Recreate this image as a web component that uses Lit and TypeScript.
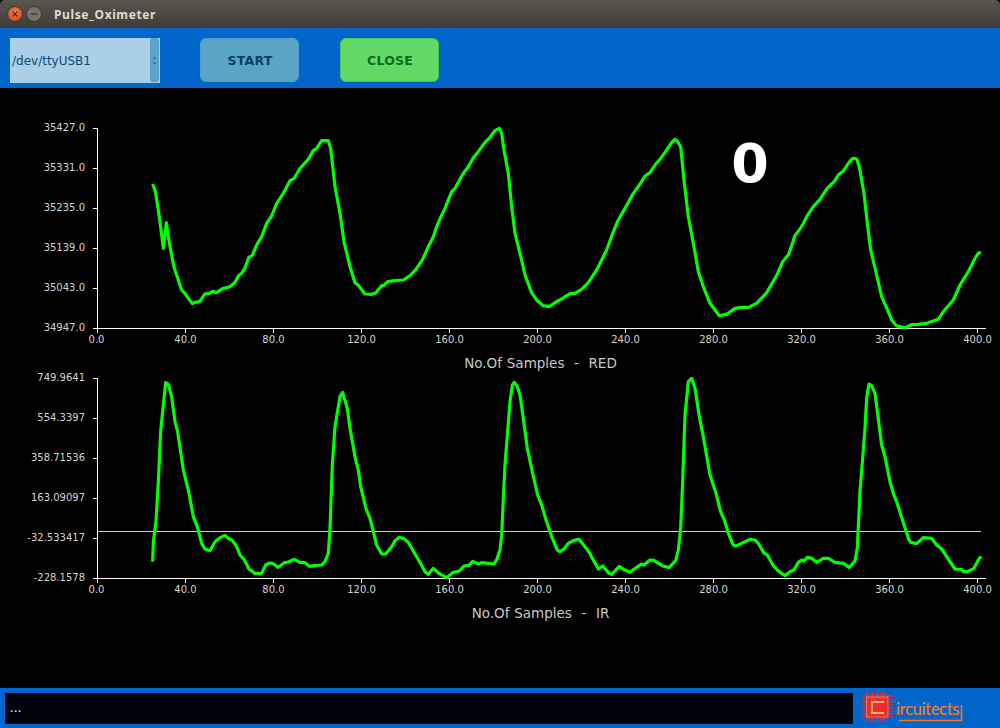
import { LitElement, html, css, svg } from "lit";
import { customElement, property } from "lit/decorators.js";

type P = [number, number];
const conv = (ox: number, oy: number, pts: P[]): P[] => pts.map(([x, y]) => [ox + x / 3, oy + y / 3] as P);

const RED: P[] = [
  ...conv(0, 110, [[458,222],[466,243],[474,295],[482,350],[490,415],[499,338],[505,380],[513,425],[522,472],[530,495],[545,540],[556,552],[577,581],[585,577],[600,574],[614,552],[628,550],[638,544],[650,548],[668,536],[685,532],[695,526],[706,516],[715,498],[725,490],[735,474],[746,443],[757,436],[770,405],[785,380],[800,340],[815,318],[830,280],[850,250],[870,212],[883,205],[900,175],[925,148],[940,122],[950,115],[965,92],[985,92],[992,115],[1005,230]]),
  ...conv(340, 110, [[0,310],[12,395],[30,470],[45,518],[55,526],[75,552],[95,553],[108,548],[125,527],[132,526],[143,515],[165,512],[190,510],[210,497],[228,478],[248,448],[265,410],[280,380],[290,350],[303,320],[315,295],[335,245],[345,235],[370,190],[385,170],[400,143],[415,125],[435,97],[450,82],[465,62],[478,55],[485,70],[492,120],[505,190],[515,290],[525,370],[540,430],[555,495],[575,548],[590,570],[610,587],[628,590],[650,575],[668,565],[680,557],[692,550],[705,550],[725,538],[745,518],[770,480],[800,420],[820,365],[835,330],[855,295],[880,250],[905,215],[915,198],[930,188],[945,165],[960,148],[975,127],[995,98],[1005,88],[1012,93]]),
  ...conv(660, 110, [[62,110],[72,210],[85,320],[100,400],[115,485],[130,530],[150,580],[178,617],[200,613],[225,595],[245,592],[265,592],[290,580],[320,548],[350,497],[368,455],[385,435],[405,377],[425,350],[440,320],[460,290],[480,268],[500,237],[525,212],[535,195],[550,183],[565,160],[578,145],[590,147],[598,170],[612,250],[622,340],[632,420],[650,495],[665,560],[685,605],[695,630],[710,648],[735,653],[755,644],[775,643],[800,640],[835,628],[850,605],[880,570],[900,525],[925,485],[945,445],[955,430],[963,427]]),
];

const IR: P[] = [
  ...conv(0, 365, [[458,590],[460,530],[468,470],[475,350],[482,200],[490,120],[497,53],[505,58],[515,95],[525,170],[533,200],[550,315],[565,375],[580,455],[592,485],[605,535],[615,552],[630,557],[645,530],[660,518],[675,511],[685,520],[695,524],[710,545],[720,570],[732,583],[747,612],[765,625],[785,625],[797,600],[808,594],[818,595],[835,607],[853,593],[865,591],[883,583],[900,592],[915,593],[928,604],[945,601],[965,600],[975,590],[985,565],[990,490],[997,300],[1005,185]]),
  ...conv(340, 365, [[0,95],[8,82],[22,130],[30,190],[45,275],[55,315],[62,365],[78,430],[90,460],[110,540],[125,567],[137,567],[155,545],[165,527],[178,517],[190,520],[205,532],[225,567],[240,592],[255,620],[265,628],[280,610],[297,625],[320,638],[340,622],[358,618],[372,603],[387,601],[398,589],[415,597],[425,593],[445,595],[462,597],[470,585],[480,555],[485,510],[490,400],[495,300],[503,200],[510,110],[517,60],[523,52],[532,65],[540,90],[550,160],[562,250],[578,325],[593,390],[605,420],[620,470],[635,515],[652,555],[660,560],[672,552],[685,535],[700,527],[717,523],[745,558],[775,612],[788,603],[807,625],[815,628],[838,604],[850,613],[870,622],[890,607],[905,597],[912,600],[930,585],[942,586],[955,595]]),
  ...conv(660, 365, [[0,597],[8,603],[28,607],[47,587],[55,555],[62,490],[68,350],[75,150],[85,50],[95,40],[105,70],[118,155],[130,215],[150,330],[168,385],[182,440],[193,465],[205,505],[220,540],[228,543],[270,523],[285,525],[295,535],[310,562],[322,570],[340,602],[355,618],[375,632],[390,620],[402,615],[415,592],[425,585],[432,588],[442,577],[455,580],[470,592],[490,580],[505,580],[525,592],[550,595],[568,607],[585,588],[592,550],[600,380],[615,190],[620,100],[627,57],[635,62],[645,85],[665,240],[675,275],[690,350],[700,385],[710,410],[745,520],[752,532],[770,536],[790,518],[815,520],[830,540],[845,552],[885,612],[905,613],[910,620],[922,620],[942,610],[955,585],[963,574]]),
];

const XT = [0, 40, 80, 120, 160, 200, 240, 280, 320, 360, 400];

@customElement("pulse-chart")
class PulseChart extends LitElement {
  @property({ attribute: false }) points: P[] = [];
  @property({ attribute: false }) yLabels: string[] = [];
  @property({ type: Number }) top = 0;
  @property({ type: Number }) vy = 0;
  @property({ type: Number }) vh = 0;
  @property() label = "";
  @property({ type: Number }) cross = 0;
  @property({ type: Boolean }) big = false;
  static styles = css`
    :host { display: block; }
    svg { display: block; width: 1000px; }
    text { font-family: "DejaVu Sans", sans-serif; fill: #d4d4d4; }
    .tick { font-size: 10px; }
    .title { font-size: 13.5px; word-spacing: 0.5px; fill: #c8c8c8; white-space: pre; text-anchor: middle; }
    .axis { stroke: #fff; stroke-width: 1; fill: none; shape-rendering: crispEdges; }
    .cross { stroke: #d0d0d0; stroke-width: 1; shape-rendering: crispEdges; }
    .line { stroke: #00ff00; stroke-width: 3.2; fill: none; stroke-linejoin: round; stroke-linecap: butt; }
    .big { font-size: 54px; font-weight: 700; fill: #fff; text-anchor: middle; }
  `;
  render() {
    const t = this.top, b = t + 200;
    const px = (v: number) => 97.5 + v * 2.2;
    return html`<svg viewBox="0 ${this.vy} 1000 ${this.vh}" style="height:${this.vh}px">
      ${this.yLabels.map((l, i) => {
        const y = b - i * 40 + 0.5;
        return svg`<text class="tick" x="85" y=${y + 2.5} text-anchor="end">${l}</text>
          <line class="axis" x1="93" x2="97" y1=${y} y2=${y}></line>`;
      })}
      <line class="axis" x1="97.5" x2="97.5" y1=${t} y2=${b + 0.5}></line>
      <line class="axis" x1="97" x2="986" y1=${b + 0.5} y2=${b + 0.5}></line>
      ${XT.map(v => svg`
        <line class="axis" x1=${px(v)} x2=${px(v)} y1=${b} y2=${b + 5}></line>
        <text class="tick" x=${px(v) - (v === 0 ? 1 : 0)} y=${b + 15} text-anchor="middle">${v.toFixed(1)}</text>`)}
      ${this.cross ? svg`<line class="cross" x1="97" x2="981" y1=${this.cross} y2=${this.cross}></line>` : ""}
      <polyline class="line" points=${this.points.map(p => p.join(",")).join(" ")}></polyline>
      <text class="title" x="540.5" y=${b + 40}>${this.label}</text>
      ${this.big ? svg`<text class="big" x="750" y="182">0</text>` : ""}
    </svg>`;
  }
}

@customElement("app-root")
export class AppRoot extends LitElement {
  static styles = css`
    :host { display: flex; flex-direction: column; width: 1000px; height: 728px; background: #000; overflow: hidden; font-family: "DejaVu Sans", sans-serif; }
    .titlebar { height: 28px; flex: none; display: flex; align-items: center; gap: 3px; padding-left: 7px; box-sizing: border-box; background: linear-gradient(#5a574f, #3e3c37); border-radius: 5px 5px 0 0; }
    .wb { width: 16px; height: 16px; flex: none; display: block; }
    .wtitle { margin-left: 9px; font: 700 12px "Noto Sans", sans-serif; color: #dfdbd2; letter-spacing: 0.6px; }
    .toolbar { height: 60px; flex: none; background: #0066cc; display: flex; align-items: flex-start; padding: 10px 0 0 10px; box-sizing: border-box; }
    .combo { width: 150px; height: 45px; box-sizing: border-box; background: #a9d0e6; display: flex; align-items: center; justify-content: space-between; padding-left: 2px; font-size: 12px; color: #0d4a6e; }
    .combo-btn { width: 9px; height: 44px; margin-right: 1px; align-self: flex-start; background: #5aa3c6; border-radius: 3px; display: flex; align-items: center; justify-content: center; font-size: 12px; color: #0d3c58; }
    .btn { width: 99px; height: 44px; box-sizing: border-box; border-radius: 6px; display: flex; align-items: center; justify-content: center; font-size: 12.5px; font-weight: 700; letter-spacing: 0.2px; }
    .start { margin-left: 40px; padding-left: 1px; background: #5aa4c6; border: 1px solid #529dc9; color: #0b3f5e; }
    .close { margin-left: 41px; padding-left: 1px; background: #63d966; border: 1px solid #3fc84f; color: #0c6a1c; }
    .main { flex: 1; min-height: 0; background: #000; }
    .footer { height: 40px; flex: none; background: #0066cc; display: flex; align-items: flex-start; padding: 5px 0 0 5px; box-sizing: border-box; }
    .console { width: 848px; height: 31px; background: #00040f; color: #fff; font-size: 12px; display: flex; align-items: center; padding-left: 5px; padding-bottom: 2px; box-sizing: border-box; }
    .logo { margin: -5px 0 0 5px; display: block; }
    .logo text { font: 500 17px "Lato", sans-serif; letter-spacing: -0.55px; fill: #f57c14; }
  `;
  render() {
    return html`
      <div class="titlebar">
        <svg class="wb" viewBox="0 0 16 16">
          <defs><radialGradient id="cg" cx=".5" cy=".35" r=".7"><stop offset="0" stop-color="#f47a4a"></stop><stop offset="1" stop-color="#d8431c"></stop></radialGradient></defs>
          <circle cx="8" cy="8" r="7.5" fill="url(#cg)" stroke="#3a3833"></circle>
          <path d="M5.7 5.7l4.6 4.6M10.3 5.7l-4.6 4.6" stroke="#4a2416" stroke-width="1.2"></path>
        </svg>
        <svg class="wb" viewBox="0 0 16 16">
          <circle cx="8" cy="8" r="7.5" fill="#76736b" stroke="#3a3833"></circle>
          <path d="M4.5 8h7" stroke="#37352f" stroke-width="1.3"></path>
        </svg>
        <span class="wtitle">Pulse_Oximeter</span>
      </div>
      <div class="toolbar">
        <div class="combo"><span>/dev/ttyUSB1</span><span class="combo-btn">:</span></div>
        <div class="btn start">START</div>
        <div class="btn close">CLOSE</div>
      </div>
      <div class="main">
        <pulse-chart .points=${RED} .yLabels=${["34947.0","35043.0","35139.0","35235.0","35331.0","35427.0"]}
          top="128" vy="88" vh="284" label="No.Of Samples  -  RED" big></pulse-chart>
        <pulse-chart .points=${IR} .yLabels=${["-228.1578","-32.533417","163.09097","358.71536","554.3397","749.9641"]}
          top="378" vy="372" vh="316" label="No.Of Samples  -  IR" cross="531.5"></pulse-chart>
      </div>
      <div class="footer">
        <div class="console">...</div>
        <svg class="logo" width="105" height="36" viewBox="858 688 105 36">
          <g stroke-width="1.4">
            ${[0,1,2,3,4,5,6,7].map(i => svg`<path d="M${867 + i * 2.7} 692v30" stroke=${i % 2 ? "#d02a4a" : "#f52a3c"}></path><path d="M862 ${696 + i * 3}h31" stroke=${i % 2 ? "#d02a4a" : "#f52a3c"}></path>`)}
          </g>
          <rect x="866.5" y="697" width="21.5" height="20" fill="#f02b36" stroke="#f8a030" stroke-width=".7"></rect>
          <path d="M884 702h-12v11h12" fill="none" stroke="#f7b24e" stroke-width="2"></path>
          <text x="896" y="715">ircuitects</text>
          <path d="M899 720.5h62.5V705" fill="none" stroke="#f57c14" stroke-width="1.6"></path>
        </svg>
      </div>
    `;
  }
}
